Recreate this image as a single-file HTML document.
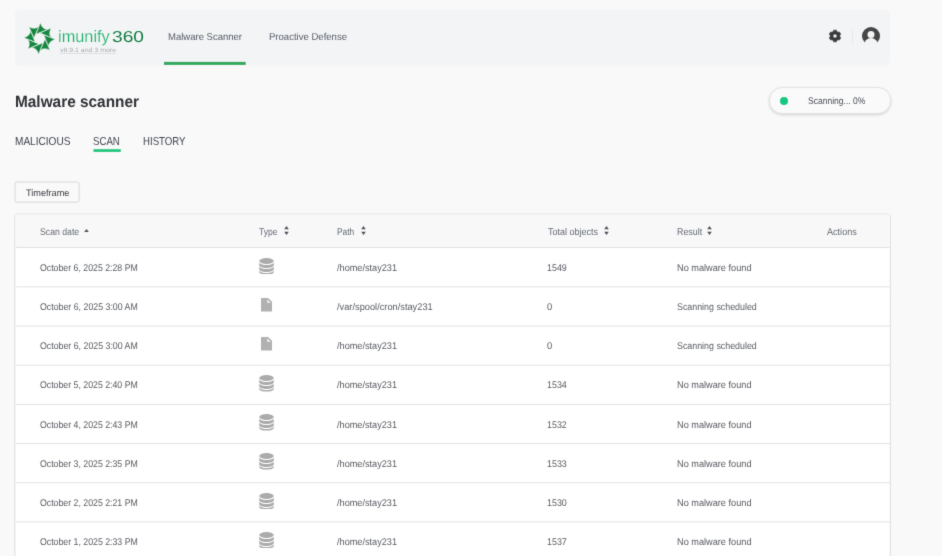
<!DOCTYPE html>
<html><head><meta charset="utf-8">
<style>
*{box-sizing:border-box;margin:0;padding:0}
html,body{width:942px;height:560px;overflow:hidden;background:#f9f9f9;font-family:"Liberation Sans",sans-serif}
#wrap{position:absolute;left:0;top:0;width:942px;height:560px;overflow:hidden;filter:url(#bl)}
.a{position:absolute;white-space:nowrap}
.t{line-height:1;transform-origin:0 0;text-rendering:geometricPrecision}
#pill{position:absolute;left:769px;top:87.2px;width:122px;height:26.4px;border-radius:13.2px;background:#fafafa;border:1px solid #e2e2e2;box-shadow:0 1.2px 3px rgba(0,0,0,.14)}
#dot{position:absolute;left:780.2px;top:96.6px;width:8px;height:8px;border-radius:50%;background:#17c77f}
</style></head><body><svg width="0" height="0" style="position:absolute"><filter id="bl" x="0" y="0" width="1" height="1" color-interpolation-filters="sRGB"><feConvolveMatrix order="3" kernelMatrix="0.015 0.08 0.015 0.08 0.62 0.08 0.015 0.08 0.015" edgeMode="duplicate"/></filter></svg><div id="wrap">
<svg class="a" style="left:0;top:0" width="942" height="560" viewBox="0 0 942 560">
<rect x="15" y="10" width="875" height="55.6" rx="4" fill="#f3f4f6"/>
<rect x="164" y="61.9" width="81.7" height="3" fill="#35a860"/>
<rect x="93.5" y="149.2" width="27.3" height="2.7" fill="#22c47a"/>
<rect x="15" y="182" width="64.14" height="20.14" rx="2" fill="#f9f9f9" stroke="#d6d7d8" stroke-width="1"/>
<rect x="14.86" y="214.1" width="875.44" height="400" rx="2" fill="#fff" stroke="#dadcdd" stroke-width="1"/>
<path d="M15.36 214.6H889.8V246.93H15.36z" fill="#f8f8f8"/>
<rect x="15.36" y="246.93" width="874.44" height="1" fill="#e0e2e5"/>
<rect x="15.36" y="286.36" width="874.44" height="1" fill="#e0e3e6"/><rect x="15.36" y="325.53" width="874.44" height="1" fill="#e0e3e6"/><rect x="15.36" y="364.70" width="874.44" height="1" fill="#e0e3e6"/><rect x="15.36" y="403.87" width="874.44" height="1" fill="#e0e3e6"/><rect x="15.36" y="443.04" width="874.44" height="1" fill="#e0e3e6"/><rect x="15.36" y="482.21" width="874.44" height="1" fill="#e0e3e6"/><rect x="15.36" y="521.38" width="874.44" height="1" fill="#e0e3e6"/></svg>
<svg class="a" style="left:23.30px;top:21.65px" width="33" height="33" viewBox="-16.5 -16.5 33 33"><g fill="#168640" stroke="#eef4f0" stroke-width="0.6" stroke-linejoin="round"><path d="M0.82,-15.68Q3.20,-8.46 8.59,-9.22L-3.52,-4.35Z"/><path d="M11.67,-10.51Q8.25,-3.72 12.59,-0.44L0.59,-5.57Z"/><path d="M15.68,0.82Q8.46,3.20 9.22,8.59L4.35,-3.52Z"/><path d="M10.51,11.67Q3.72,8.25 0.44,12.59L5.57,0.59Z"/><path d="M-0.82,15.68Q-3.20,8.46 -8.59,9.22L3.52,4.35Z"/><path d="M-11.67,10.51Q-8.25,3.72 -12.59,0.44L-0.59,5.57Z"/><path d="M-15.68,-0.82Q-8.46,-3.20 -9.22,-8.59L-4.35,3.52Z"/><path d="M-10.51,-11.67Q-3.72,-8.25 -0.44,-12.59L-5.57,-0.59Z"/></g></svg>
<svg class="a" style="left:828.40px;top:29.30px" width="14" height="14" viewBox="-7.0 -7.0 14 14"><path fill="#3a3a3a" fill-rule="evenodd" stroke="#3a3a3a" stroke-width="0.6" stroke-linejoin="round" d="M-1.74,-4.53 L-1.30,-5.86 L1.30,-5.86 L1.74,-4.53 L3.05,-3.77 L4.42,-4.05 L5.72,-1.80 L4.79,-0.76 L4.79,0.76 L5.72,1.80 L4.42,4.05 L3.05,3.77 L1.74,4.53 L1.30,5.86 L-1.30,5.86 L-1.74,4.53 L-3.05,3.77 L-4.42,4.05 L-5.72,1.80 L-4.79,0.76 L-4.79,-0.76 L-5.72,-1.80 L-4.42,-4.05 L-3.05,-3.77ZM2.0,0A2.0,2.0 0 1 0 -2.0,0A2.0,2.0 0 1 0 2.0,0Z"/></svg>
<div class="a" style="left:852px;top:28.5px;width:1px;height:15.5px;background:#e6e7ea"></div>
<svg class="a" style="left:862.2px;top:26.8px" width="18" height="18" viewBox="0 0 20 20"><defs><mask id="mk"><rect x="-1" y="-1" width="22" height="22" fill="#fff"/><circle cx="10" cy="8.4" r="3.9" fill="#000"/><circle cx="10" cy="20.2" r="7.9" fill="#000"/></mask></defs><circle cx="10" cy="10" r="10" fill="#464646" mask="url(#mk)"/></svg>
<div id="pill"></div><div id="dot"></div>
<svg class="a" style="left:84.3px;top:229.0px" width="5" height="3.2" viewBox="0 0 5 3.2"><path fill="#4d525c" d="M2.5 0L5 3.2H0z"/></svg>
<svg class="a" style="left:283.9px;top:225.9px" width="5" height="9" viewBox="0 0 5 9"><path fill="#4d525c" d="M2.5 0L4.8 3.2H0.2z M0.2 5.8H4.8L2.5 9z"/></svg>
<svg class="a" style="left:360.7px;top:225.9px" width="5" height="9" viewBox="0 0 5 9"><path fill="#4d525c" d="M2.5 0L4.8 3.2H0.2z M0.2 5.8H4.8L2.5 9z"/></svg>
<svg class="a" style="left:604.4px;top:225.9px" width="5" height="9" viewBox="0 0 5 9"><path fill="#4d525c" d="M2.5 0L4.8 3.2H0.2z M0.2 5.8H4.8L2.5 9z"/></svg>
<svg class="a" style="left:707.4px;top:225.9px" width="5" height="9" viewBox="0 0 5 9"><path fill="#4d525c" d="M2.5 0L4.8 3.2H0.2z M0.2 5.8H4.8L2.5 9z"/></svg>
<svg class="a" style="left:258.7px;top:257.60px" width="15" height="16.5" viewBox="0 0 15 16.5"><g fill="#ababab"><ellipse cx="7.5" cy="3" rx="7.3" ry="2.9"/><path d="M0.2 4.7c1.2 1.6 4 2.4 7.3 2.4s6.1-.8 7.3-2.4v2.5c0 1.6-3.3 2.8-7.3 2.8S0.2 8.8 0.2 7.2z"/><path d="M0.2 8.7c1.2 1.6 4 2.4 7.3 2.4s6.1-.8 7.3-2.4v2.5c0 1.6-3.3 2.8-7.3 2.8S0.2 12.8 0.2 11.2z"/><path d="M0.2 12.7c1.2 1.6 4 2.4 7.3 2.4s6.1-.8 7.3-2.4v1.2c0 1.6-3.3 2.6-7.3 2.6S0.2 15.5 0.2 13.9z"/></g></svg>
<svg class="a" style="left:261.0px;top:298.00px" width="11" height="13.5" viewBox="0 0 11 13.5"><path fill="#b1b1b1" d="M0 0.6Q0 0 .6 0H7.2l3.8 3.8v9.1q0 .6-.6.6H.6Q0 13.5 0 12.9z"/><path fill="#fff" d="M6.4 1.6V4.7H9.5z"/></svg>
<svg class="a" style="left:261.0px;top:337.17px" width="11" height="13.5" viewBox="0 0 11 13.5"><path fill="#b1b1b1" d="M0 0.6Q0 0 .6 0H7.2l3.8 3.8v9.1q0 .6-.6.6H.6Q0 13.5 0 12.9z"/><path fill="#fff" d="M6.4 1.6V4.7H9.5z"/></svg>
<svg class="a" style="left:258.7px;top:375.11px" width="15" height="16.5" viewBox="0 0 15 16.5"><g fill="#ababab"><ellipse cx="7.5" cy="3" rx="7.3" ry="2.9"/><path d="M0.2 4.7c1.2 1.6 4 2.4 7.3 2.4s6.1-.8 7.3-2.4v2.5c0 1.6-3.3 2.8-7.3 2.8S0.2 8.8 0.2 7.2z"/><path d="M0.2 8.7c1.2 1.6 4 2.4 7.3 2.4s6.1-.8 7.3-2.4v2.5c0 1.6-3.3 2.8-7.3 2.8S0.2 12.8 0.2 11.2z"/><path d="M0.2 12.7c1.2 1.6 4 2.4 7.3 2.4s6.1-.8 7.3-2.4v1.2c0 1.6-3.3 2.6-7.3 2.6S0.2 15.5 0.2 13.9z"/></g></svg>
<svg class="a" style="left:258.7px;top:414.28px" width="15" height="16.5" viewBox="0 0 15 16.5"><g fill="#ababab"><ellipse cx="7.5" cy="3" rx="7.3" ry="2.9"/><path d="M0.2 4.7c1.2 1.6 4 2.4 7.3 2.4s6.1-.8 7.3-2.4v2.5c0 1.6-3.3 2.8-7.3 2.8S0.2 8.8 0.2 7.2z"/><path d="M0.2 8.7c1.2 1.6 4 2.4 7.3 2.4s6.1-.8 7.3-2.4v2.5c0 1.6-3.3 2.8-7.3 2.8S0.2 12.8 0.2 11.2z"/><path d="M0.2 12.7c1.2 1.6 4 2.4 7.3 2.4s6.1-.8 7.3-2.4v1.2c0 1.6-3.3 2.6-7.3 2.6S0.2 15.5 0.2 13.9z"/></g></svg>
<svg class="a" style="left:258.7px;top:453.45px" width="15" height="16.5" viewBox="0 0 15 16.5"><g fill="#ababab"><ellipse cx="7.5" cy="3" rx="7.3" ry="2.9"/><path d="M0.2 4.7c1.2 1.6 4 2.4 7.3 2.4s6.1-.8 7.3-2.4v2.5c0 1.6-3.3 2.8-7.3 2.8S0.2 8.8 0.2 7.2z"/><path d="M0.2 8.7c1.2 1.6 4 2.4 7.3 2.4s6.1-.8 7.3-2.4v2.5c0 1.6-3.3 2.8-7.3 2.8S0.2 12.8 0.2 11.2z"/><path d="M0.2 12.7c1.2 1.6 4 2.4 7.3 2.4s6.1-.8 7.3-2.4v1.2c0 1.6-3.3 2.6-7.3 2.6S0.2 15.5 0.2 13.9z"/></g></svg>
<svg class="a" style="left:258.7px;top:492.62px" width="15" height="16.5" viewBox="0 0 15 16.5"><g fill="#ababab"><ellipse cx="7.5" cy="3" rx="7.3" ry="2.9"/><path d="M0.2 4.7c1.2 1.6 4 2.4 7.3 2.4s6.1-.8 7.3-2.4v2.5c0 1.6-3.3 2.8-7.3 2.8S0.2 8.8 0.2 7.2z"/><path d="M0.2 8.7c1.2 1.6 4 2.4 7.3 2.4s6.1-.8 7.3-2.4v2.5c0 1.6-3.3 2.8-7.3 2.8S0.2 12.8 0.2 11.2z"/><path d="M0.2 12.7c1.2 1.6 4 2.4 7.3 2.4s6.1-.8 7.3-2.4v1.2c0 1.6-3.3 2.6-7.3 2.6S0.2 15.5 0.2 13.9z"/></g></svg>
<svg class="a" style="left:258.7px;top:531.79px" width="15" height="16.5" viewBox="0 0 15 16.5"><g fill="#ababab"><ellipse cx="7.5" cy="3" rx="7.3" ry="2.9"/><path d="M0.2 4.7c1.2 1.6 4 2.4 7.3 2.4s6.1-.8 7.3-2.4v2.5c0 1.6-3.3 2.8-7.3 2.8S0.2 8.8 0.2 7.2z"/><path d="M0.2 8.7c1.2 1.6 4 2.4 7.3 2.4s6.1-.8 7.3-2.4v2.5c0 1.6-3.3 2.8-7.3 2.8S0.2 12.8 0.2 11.2z"/><path d="M0.2 12.7c1.2 1.6 4 2.4 7.3 2.4s6.1-.8 7.3-2.4v1.2c0 1.6-3.3 2.6-7.3 2.6S0.2 15.5 0.2 13.9z"/></g></svg>
<div class="a t" style="left:58.3px;top:29.05px;font-size:16.6px;color:#1cb067;transform:scaleX(0.9836);-webkit-text-stroke:0.2px #f3f4f6;">imunify</div>
<div class="a t" style="left:112.0px;top:29.93px;font-size:15.8px;color:#137b41;transform:scaleX(1.2140);">360</div>
<div class="a t" style="left:59.5px;top:48.35px;font-size:6.2px;color:#a8abaf;transform:scaleX(1.1228);text-decoration:underline;text-decoration-color:#dcdee1;">v8.9.1 and 3 more</div>
<div class="a t" style="left:167.5px;top:32.78px;font-size:10.0px;color:#555b66;transform:scaleX(0.9510);">Malware Scanner</div>
<div class="a t" style="left:268.5px;top:32.78px;font-size:10.0px;color:#555b66;transform:scaleX(0.9545);">Proactive Defense</div>
<div class="a t" style="left:14.6px;top:93.99px;font-size:16.2px;font-weight:bold;color:#2f3236;transform:scaleX(0.9504);">Malware scanner</div>
<div class="a t" style="left:15.2px;top:136.77px;font-size:11.5px;color:#3f4450;transform:scaleX(0.8757);">MALICIOUS</div>
<div class="a t" style="left:93.0px;top:136.77px;font-size:11.5px;color:#3f4450;transform:scaleX(0.8387);">SCAN</div>
<div class="a t" style="left:143.4px;top:136.77px;font-size:11.5px;color:#3f4450;transform:scaleX(0.8382);">HISTORY</div>
<div class="a t" style="left:808.1px;top:97.12px;font-size:9.6px;color:#4a4e55;transform:scaleX(0.8877);">Scanning... 0%</div>
<div class="a t" style="left:25.7px;top:188.96px;font-size:9.5px;color:#3a3d43;transform:scaleX(0.9634);">Timeframe</div>
<div class="a t" style="left:39.8px;top:227.90px;font-size:9.8px;color:#646a75;transform:scaleX(0.8884);">Scan date</div>
<div class="a t" style="left:259.0px;top:227.90px;font-size:9.8px;color:#646a75;transform:scaleX(0.8753);">Type</div>
<div class="a t" style="left:336.9px;top:227.90px;font-size:9.8px;color:#646a75;transform:scaleX(0.8484);">Path</div>
<div class="a t" style="left:547.7px;top:227.90px;font-size:9.8px;color:#646a75;transform:scaleX(0.9198);">Total objects</div>
<div class="a t" style="left:676.6px;top:227.90px;font-size:9.8px;color:#646a75;transform:scaleX(0.9071);">Result</div>
<div class="a t" style="left:827.2px;top:227.90px;font-size:9.8px;color:#646a75;transform:scaleX(0.9272);">Actions</div>
<div class="a t" style="left:40.2px;top:263.90px;font-size:9.8px;color:#575a60;transform:scaleX(0.8934);">October 6, 2025 2:28 PM</div>
<div class="a t" style="left:336.7px;top:263.90px;font-size:9.8px;color:#575a60;transform:scaleX(0.9336);">/home/stay231</div>
<div class="a t" style="left:547.4px;top:263.90px;font-size:9.8px;color:#575a60;transform:scaleX(0.9084);">1549</div>
<div class="a t" style="left:676.5px;top:263.90px;font-size:9.8px;color:#575a60;transform:scaleX(0.9369);">No malware found</div>
<div class="a t" style="left:40.2px;top:303.07px;font-size:9.8px;color:#575a60;transform:scaleX(0.8978);">October 6, 2025 3:00 AM</div>
<div class="a t" style="left:336.7px;top:303.07px;font-size:9.8px;color:#575a60;transform:scaleX(0.9447);">/var/spool/cron/stay231</div>
<div class="a t" style="left:547.4px;top:303.07px;font-size:9.8px;color:#575a60;transform:scaleX(0.9500);">0</div>
<div class="a t" style="left:676.5px;top:303.07px;font-size:9.8px;color:#575a60;transform:scaleX(0.9042);">Scanning scheduled</div>
<div class="a t" style="left:40.2px;top:342.24px;font-size:9.8px;color:#575a60;transform:scaleX(0.8978);">October 6, 2025 3:00 AM</div>
<div class="a t" style="left:336.7px;top:342.24px;font-size:9.8px;color:#575a60;transform:scaleX(0.9336);">/home/stay231</div>
<div class="a t" style="left:547.4px;top:342.24px;font-size:9.8px;color:#575a60;transform:scaleX(0.9500);">0</div>
<div class="a t" style="left:676.5px;top:342.24px;font-size:9.8px;color:#575a60;transform:scaleX(0.9042);">Scanning scheduled</div>
<div class="a t" style="left:40.2px;top:381.41px;font-size:9.8px;color:#575a60;transform:scaleX(0.8934);">October 5, 2025 2:40 PM</div>
<div class="a t" style="left:336.7px;top:381.41px;font-size:9.8px;color:#575a60;transform:scaleX(0.9336);">/home/stay231</div>
<div class="a t" style="left:547.4px;top:381.41px;font-size:9.8px;color:#575a60;transform:scaleX(0.9084);">1534</div>
<div class="a t" style="left:676.5px;top:381.41px;font-size:9.8px;color:#575a60;transform:scaleX(0.9369);">No malware found</div>
<div class="a t" style="left:40.2px;top:420.58px;font-size:9.8px;color:#575a60;transform:scaleX(0.8934);">October 4, 2025 2:43 PM</div>
<div class="a t" style="left:336.7px;top:420.58px;font-size:9.8px;color:#575a60;transform:scaleX(0.9336);">/home/stay231</div>
<div class="a t" style="left:547.4px;top:420.58px;font-size:9.8px;color:#575a60;transform:scaleX(0.9084);">1532</div>
<div class="a t" style="left:676.5px;top:420.58px;font-size:9.8px;color:#575a60;transform:scaleX(0.9369);">No malware found</div>
<div class="a t" style="left:40.2px;top:459.75px;font-size:9.8px;color:#575a60;transform:scaleX(0.8934);">October 3, 2025 2:35 PM</div>
<div class="a t" style="left:336.7px;top:459.75px;font-size:9.8px;color:#575a60;transform:scaleX(0.9336);">/home/stay231</div>
<div class="a t" style="left:547.4px;top:459.75px;font-size:9.8px;color:#575a60;transform:scaleX(0.9084);">1533</div>
<div class="a t" style="left:676.5px;top:459.75px;font-size:9.8px;color:#575a60;transform:scaleX(0.9369);">No malware found</div>
<div class="a t" style="left:40.2px;top:498.92px;font-size:9.8px;color:#575a60;transform:scaleX(0.8934);">October 2, 2025 2:21 PM</div>
<div class="a t" style="left:336.7px;top:498.92px;font-size:9.8px;color:#575a60;transform:scaleX(0.9336);">/home/stay231</div>
<div class="a t" style="left:547.4px;top:498.92px;font-size:9.8px;color:#575a60;transform:scaleX(0.9084);">1530</div>
<div class="a t" style="left:676.5px;top:498.92px;font-size:9.8px;color:#575a60;transform:scaleX(0.9369);">No malware found</div>
<div class="a t" style="left:40.2px;top:538.09px;font-size:9.8px;color:#575a60;transform:scaleX(0.8934);">October 1, 2025 2:33 PM</div>
<div class="a t" style="left:336.7px;top:538.09px;font-size:9.8px;color:#575a60;transform:scaleX(0.9336);">/home/stay231</div>
<div class="a t" style="left:547.4px;top:538.09px;font-size:9.8px;color:#575a60;transform:scaleX(0.9084);">1537</div>
<div class="a t" style="left:676.5px;top:538.09px;font-size:9.8px;color:#575a60;transform:scaleX(0.9369);">No malware found</div>
<div class="a" style="left:0;top:555.9px;width:942px;height:5px;background:#fff"></div>
</div></body></html>
